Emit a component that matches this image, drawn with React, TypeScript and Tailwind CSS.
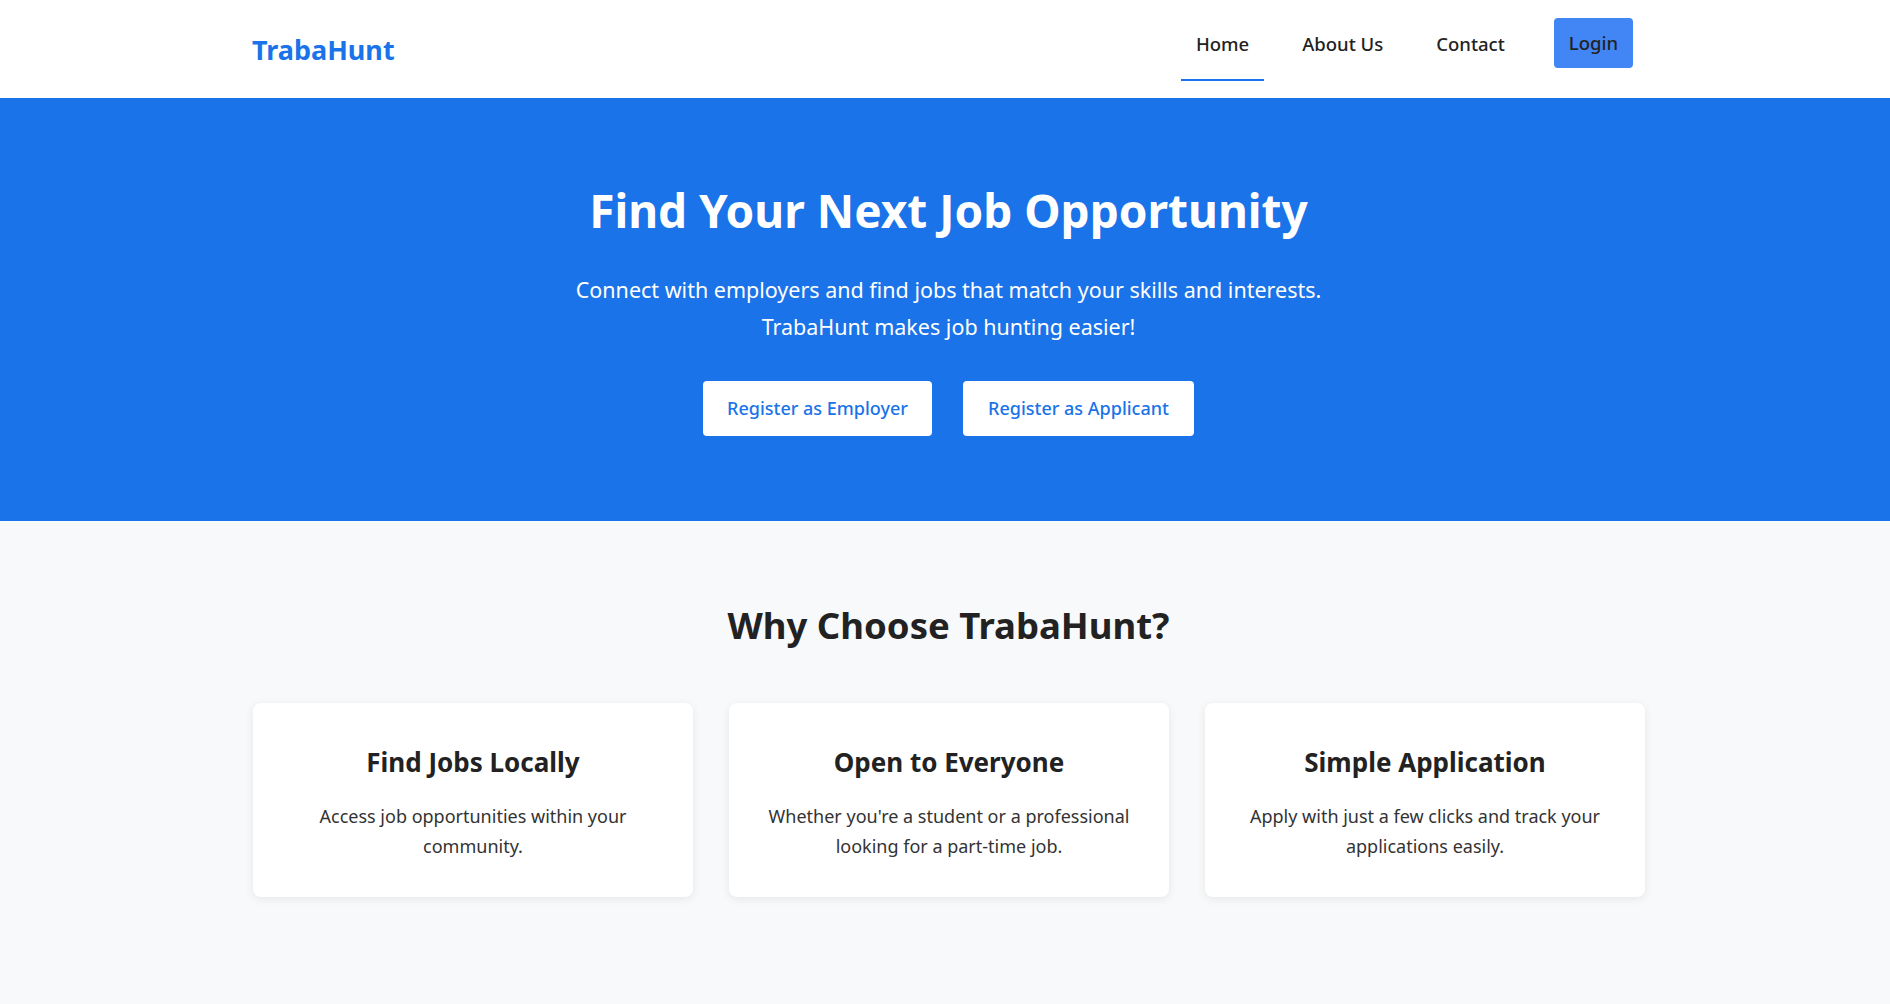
const features = [
  {
    title: "Find Jobs Locally",
    text: "Access job opportunities within your community.",
  },
  {
    title: "Open to Everyone",
    text: "Whether you're a student or a professional looking for a part-time job.",
  },
  {
    title: "Simple Application",
    text: "Apply with just a few clicks and track your applications easily.",
  },
];

export default function App() {
  return (
    <div className="min-h-screen bg-[#f8f9fa] font-['Noto_Sans',sans-serif] text-[#222]">
      {/* Navbar */}
      <header className="h-[98px] bg-white">
        <div className="mx-auto flex h-full w-[1400px] items-start justify-between pl-[7px] pr-[12px]">
          <a href="#" className="mt-[30px] text-[27px] font-bold leading-[40px] text-[#1a73e8]">
            TrabaHunt
          </a>
          <nav className="mt-[19px] flex items-center gap-[23px]">
            <a
              href="#"
              className="relative flex h-[50px] items-center px-[15px] text-[18.5px] font-medium text-[#222] after:absolute after:left-0 after:right-0 after:bottom-[-12px] after:h-[2px] after:bg-[#1a73e8] after:content-['']"
            >
              Home
            </a>
            <a href="#" className="flex h-[50px] items-center px-[15px] text-[18.5px] font-medium text-[#222]">
              About Us
            </a>
            <a href="#" className="flex h-[50px] items-center px-[15px] text-[18.5px] font-medium text-[#222]">
              Contact
            </a>
            <a
              href="#"
              className="ml-[11px] -mt-[2px] flex h-[50px] items-center rounded-[4px] bg-[#4285f4] px-[15px] text-[18.5px] font-medium text-[#222]"
            >
              Login
            </a>
          </nav>
        </div>
      </header>

      {/* Hero */}
      <section className="bg-[#1a73e8] pt-[83px] pb-[85px] pl-[7px] text-center text-white">
        <h1 className="text-[46px] font-bold leading-[58px]">Find Your Next Job Opportunity</h1>
        <p className="mx-auto mt-[32px] w-[900px] text-[21.5px] leading-[37px]">
          Connect with employers and find jobs that match your skills and interests.
          <br />
          TrabaHunt makes job hunting easier!
        </p>
        <div className="mt-[36px] flex justify-center gap-[31px]">
          <a
            href="#"
            className="flex h-[55px] w-[229px] items-center justify-center rounded-[4px] bg-white text-[18px] font-medium text-[#1a73e8]"
          >
            Register as Employer
          </a>
          <a
            href="#"
            className="flex h-[55px] w-[231px] items-center justify-center rounded-[4px] bg-white text-[18px] font-medium text-[#1a73e8]"
          >
            Register as Applicant
          </a>
        </div>
      </section>

      {/* Features */}
      <section className="pt-[81px] pb-[107px]">
        <h2 className="pl-[7px] text-center text-[36.5px] font-bold leading-[46px] text-[#222]">Why Choose TrabaHunt?</h2>
        <div className="mx-auto mt-[55px] grid w-[1400px] grid-cols-3 gap-[36px] pl-[8px]">
          {features.map((f) => (
            <div
              key={f.title}
              className="flex h-[194px] flex-col items-center rounded-[8px] bg-white px-[30px] pt-[42px] text-center shadow-[0_2px_10px_rgba(0,0,0,0.08)]"
            >
              <h3 className="text-[26px] font-bold leading-[34px] text-[#222]">{f.title}</h3>
              <p className="mt-[22px] text-[18px] leading-[30px] text-[#333]">{f.text}</p>
            </div>
          ))}
        </div>
      </section>
    </div>
  );
}
